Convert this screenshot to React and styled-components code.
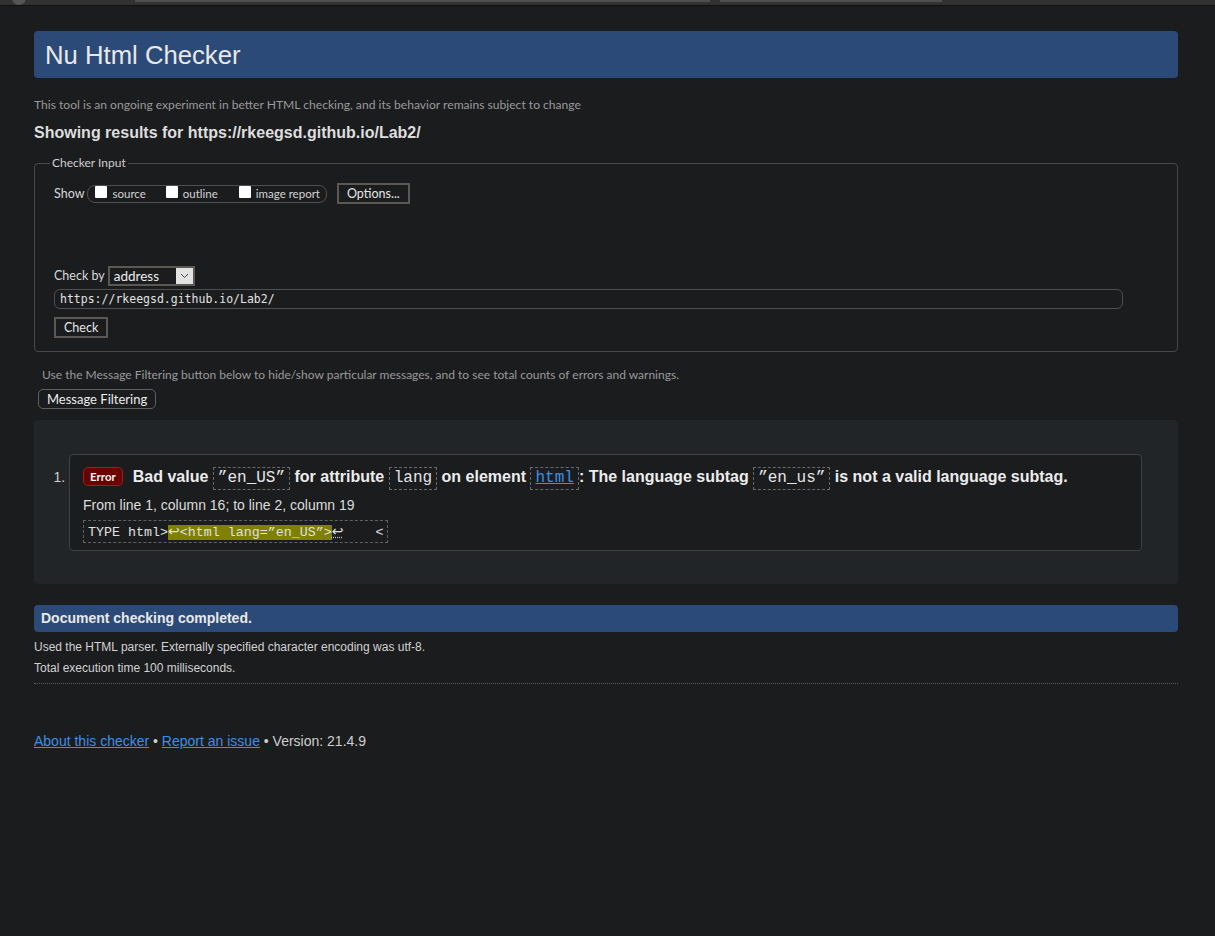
import React from "react";
import styled, { createGlobalStyle } from "styled-components";

const UI_FONT = `Lato, "Open Sans", sans-serif`;
const MAIN_FONT = `"Liberation Sans", Arial, sans-serif`;
const MONO_FONT = `"Liberation Mono", "Courier New", monospace`;

const Global = createGlobalStyle`
  html, body {
    margin: 0;
    padding: 0;
    background: #1b1c1e;
    color: #dcdcdc;
    font-family: ${MAIN_FONT};
  }
  * { box-sizing: border-box; }
`;

// the strip of browser chrome left at the top of the capture
const TopBar = styled.div`
  height: 6px;
  background: #323232;
  border-bottom: 1px solid #111;
  display: flex;
  align-items: flex-start;
  overflow: hidden;
`;

const Knob = styled.div`
  width: 14px;
  height: 14px;
  border-radius: 50%;
  background: #555;
  margin: -9px 0 0 12px;
`;

const BarField = styled.div`
  height: 2px;
  width: ${(p) => p.$w}px;
  margin-left: ${(p) => p.$ml}px;
  background: #505050;
`;

const Main = styled.main`
  margin: 25px 37px 0 34px;
  padding-bottom: 40px;
`;

const Header = styled.header`
  height: 47px;
  background: #2c4a77;
  border-radius: 4px;
  padding-left: 11px;

  h1 {
    margin: 0;
    font-size: 25.7px;
    font-weight: normal;
    line-height: 48px;
    color: #e8e8e8;
  }
`;

const Tagline = styled.p`
  margin: 19px 0 0;
  font-family: ${UI_FONT};
  font-size: 12.1px;
  line-height: 16px;
  color: #9a9a9a;
`;

const ResultsFor = styled.h2`
  margin: 10px 0 0;
  font-size: 16px;
  line-height: 20px;
  font-weight: bold;
  color: #dedede;
`;

const Fieldset = styled.fieldset`
  margin: 12px 0 0;
  padding: 0 18px 13px 19px;
  border: 1px solid #46484b;
  border-radius: 4px;
  font-family: ${UI_FONT};
  font-size: 12.5px;
  color: #d8d8d8;

  legend {
    margin-left: -4px;
    padding: 0 2px;
    font-size: 12px;
    line-height: 16px;
    color: #cfcfcf;
  }
`;

const Row = styled.div`
  display: flex;
  align-items: center;
  margin-top: ${(p) => p.$mt}px;
  height: 21px;
`;

const Pill = styled.span`
  display: inline-flex;
  align-items: center;
  height: 18px;
  margin-left: 3px;
  padding: 0 6px 0 7px;
  border: 1px solid #4d4f52;
  border-radius: 8px;
`;

const CheckLabel = styled.label`
  display: inline-flex;
  align-items: center;
  font-size: 11.5px;
  color: #d4d4d4;
  margin-right: ${(p) => p.$mr || 0}px;

  i {
    width: 12px;
    height: 12px;
    background: #fff;
    border-radius: 1px;
    margin: -4px 5px 0 0;
  }
`;

const FormButton = styled.button`
  height: 21px;
  padding: 0 8px;
  background: #1b1c1e;
  border: 2px solid #5b5752;
  color: #e6e6e6;
  font-family: ${UI_FONT};
  font-size: 12.5px;
  margin-left: ${(p) => p.$ml || 0}px;
  margin-top: ${(p) => p.$mt || 0}px;
  display: block;
`;

const Select = styled.span`
  display: inline-flex;
  align-items: center;
  justify-content: space-between;
  width: 87px;
  height: 20px;
  margin-left: 3px;
  padding-left: 4px;
  border: 2px solid #5b5752;
  background: #1b1c1e;
  font-size: 13.5px;
  color: #ececec;
`;

const SelectArrow = styled.span`
  width: 17px;
  height: 16px;
  background: #e2e2e2;
  display: flex;
  align-items: center;
  justify-content: center;
`;

const UrlInput = styled.div`
  margin-top: 3px;
  width: 1069px;
  height: 20px;
  border: 1px solid #4d4f52;
  border-radius: 6px;
  padding-left: 5px;
  font-family: "DejaVu Sans Mono", ${MONO_FONT};
  font-size: 11.5px;
  line-height: 18px;
  color: #e2e2e2;
`;

const Hint = styled.p`
  margin: 15px 0 0 8px;
  font-family: ${UI_FONT};
  font-size: 12px;
  line-height: 16px;
  color: #9a9a9a;
`;

const FilterButton = styled.button`
  display: block;
  margin: 6px 0 0 4px;
  height: 20px;
  padding: 0 8px;
  background: #1b1c1e;
  border: 1px solid #5e6063;
  border-radius: 5px;
  color: #ececec;
  font-family: ${UI_FONT};
  font-size: 13px;
`;

const ResultsPanel = styled.section`
  margin-top: 11px;
  background: #222527;
  border-radius: 4px;
  padding: 34px 36px 33px 0;

  ol {
    margin: 0;
    padding-left: 35px;
    color: #d0d0d0;
    font-size: 14px;
  }
`;

const Message = styled.li`
  background: #1b1c1e;
  border: 1px solid #3e4144;
  border-radius: 4px;
  padding: 9px 13px 7px;

  &::marker {
    color: #cfcfcf;
  }
`;

const MessageTitle = styled.p`
  margin: 0;
  font-size: 16px;
  font-weight: bold;
  line-height: 25px;
  color: #ececec;
`;

const Badge = styled.span`
  display: inline-block;
  vertical-align: 1px;
  height: 19px;
  line-height: 17px;
  padding: 0 6px;
  margin-right: 10px;
  background: #6b0000;
  border: 1px solid #8b2626;
  border-radius: 5px;
  color: #f2f2f2;
  font-family: ${UI_FONT};
  font-size: 11.5px;
  font-weight: bold;
`;

const Code = styled.code`
  display: inline-block;
  height: 23px;
  line-height: 21px;
  padding: 0 4px;
  border: 1px dashed #67696c;
  font-family: ${MONO_FONT};
  font-size: 16px;
  font-weight: normal;
  color: #e6e6e6;

  a {
    color: #3d8fe8;
    text-decoration: underline;
  }
`;

const Location = styled.p`
  margin: 5px 0 0;
  font-size: 14px;
  line-height: 20px;
  color: #dcdcdc;
`;

const Extract = styled.p`
  display: inline-block;
  margin: 5px 0 0;
  height: 23px;
  padding: 0 4px;
  border: 1px dashed #5f6164;
  font-family: ${MONO_FONT};
  font-size: 13.33px;
  line-height: 21px;
  color: #e0e0e0;
  white-space: pre;
`;

const Mark = styled.span`
  background: #7f7f00;
`;

const Return = styled.span`
  font-family: "DejaVu Sans", sans-serif;
  font-size: 14px;
  text-decoration: ${(p) => (p.$dotted ? "underline dotted #bbb" : "none")};
`;

const DoneBar = styled.h2`
  margin: 21px 0 0;
  height: 27px;
  line-height: 27px;
  padding-left: 7px;
  background: #2c4a77;
  border-radius: 4px;
  font-size: 14px;
  font-weight: bold;
  color: #e8e8e8;
`;

const Detail = styled.p`
  margin: ${(p) => p.$mt}px 0 0;
  font-size: 12px;
  line-height: 16px;
  color: #d2d2d2;
`;

const Divider = styled.hr`
  margin: 7px 0 0;
  border: 0;
  border-top: 1px dotted #5a5a5a;
`;

const Footer = styled.p`
  margin: 49px 0 0;
  font-size: 14px;
  line-height: 16px;
  color: #cfcfcf;

  a {
    color: #3d8fe8;
    text-decoration: underline;
  }
`;

const Chevron = () => (
  <svg width="9" height="6" viewBox="0 0 9 6">
    <path d="M1 1l3.5 3.5L8 1" fill="none" stroke="#444" strokeWidth="1" />
  </svg>
);

export default function App() {
  return (
    <>
      <Global />
      <TopBar>
        <Knob />
        <BarField $w={575} $ml={109} />
        <BarField $w={222} $ml={10} />
      </TopBar>
      <Main>
        <Header>
          <h1>Nu Html Checker</h1>
        </Header>
        <Tagline>
          This tool is an ongoing experiment in better HTML checking, and its behavior remains subject to change
        </Tagline>
        <ResultsFor>Showing results for https://rkeegsd.github.io/Lab2/</ResultsFor>

        <Fieldset>
          <legend>Checker Input</legend>
          <Row $mt={12}>
            Show
            <Pill>
              <CheckLabel $mr={20}><i />source</CheckLabel>
              <CheckLabel $mr={21}><i />outline</CheckLabel>
              <CheckLabel><i />image report</CheckLabel>
            </Pill>
            <FormButton $ml={10}>Options...</FormButton>
          </Row>
          <Row $mt={61}>
            Check by
            <Select>
              address
              <SelectArrow><Chevron /></SelectArrow>
            </Select>
          </Row>
          <UrlInput>https://rkeegsd.github.io/Lab2/</UrlInput>
          <FormButton $mt={8}>Check</FormButton>
        </Fieldset>

        <Hint>
          Use the Message Filtering button below to hide/show particular messages, and to see total counts of errors and warnings.
        </Hint>
        <FilterButton>Message Filtering</FilterButton>

        <ResultsPanel>
          <ol>
            <Message>
              <MessageTitle>
                <Badge>Error</Badge>
                Bad value <Code>”en_US”</Code> for attribute <Code>lang</Code> on element{" "}
                <Code><a href="#html">html</a></Code>: The language subtag <Code>”en_us”</Code> is not a valid
                language subtag.
              </MessageTitle>
              <Location>From line 1, column 16; to line 2, column 19</Location>
              <div>
                <Extract>
                  TYPE html&gt;<Mark><Return>↩</Return>&lt;html lang=”en_US”&gt;</Mark><Return $dotted>↩</Return>    &lt;
                </Extract>
              </div>
            </Message>
          </ol>
        </ResultsPanel>

        <DoneBar>Document checking completed.</DoneBar>
        <Detail $mt={7}>Used the HTML parser. Externally specified character encoding was utf-8.</Detail>
        <Detail $mt={5}>Total execution time 100 milliseconds.</Detail>
        <Divider />
        <Footer>
          <a href="#about">About this checker</a> • <a href="#issue">Report an issue</a> • Version: 21.4.9
        </Footer>
      </Main>
    </>
  );
}
